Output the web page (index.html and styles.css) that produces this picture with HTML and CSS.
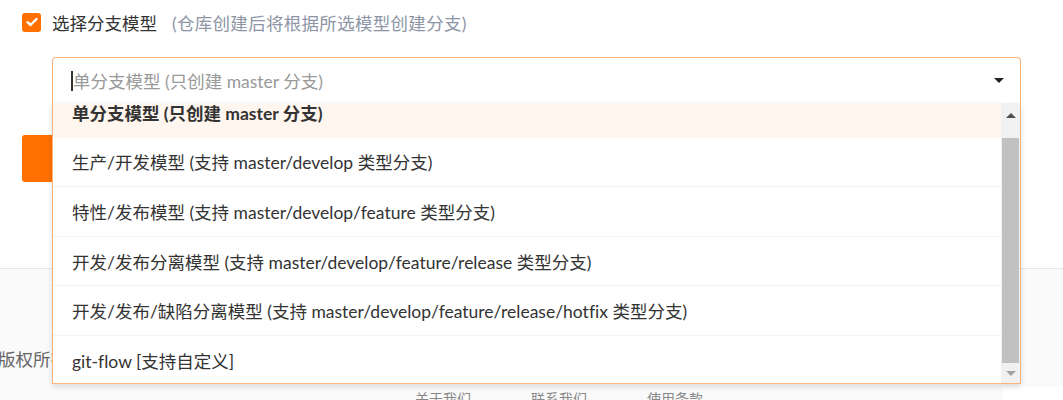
FILE: index.html
```html
<!DOCTYPE html>
<html lang="zh-CN">
<head>
<meta charset="utf-8">
<link rel="stylesheet" href="styles.css">
</head>
<body>
<div class="page">
  <section class="form">
    <div class="check-row">
      <span class="checkbox">
        <svg width="12" height="10" viewBox="0 0 12 10"><path d="M1.5 5.2 L4.6 8 L10.5 2" fill="none" stroke="#fff" stroke-width="2.4" stroke-linecap="round" stroke-linejoin="round"/></svg>
      </span>
      <span class="check-label">选择分支模型</span>
      <span class="check-hint">(仓库创建后将根据所选模型创建分支)</span>
    </div>
    <div class="select-wrap">
      <div class="select">
        <span class="caret"></span>
        <span class="placeholder">单分支模型 (只创建 master 分支)</span>
        <span class="arrow"></span>
      </div>
      <div class="dropdown">
        <div class="list">
          <div class="list-inner">
            <div class="item active">单分支模型 (只创建 master 分支)</div>
            <div class="item">生产/开发模型 (支持 master/develop 类型分支)</div>
            <div class="item">特性/发布模型 (支持 master/develop/feature 类型分支)</div>
            <div class="item">开发/发布分离模型 (支持 master/develop/feature/release 类型分支)</div>
            <div class="item">开发/发布/缺陷分离模型 (支持 master/develop/feature/release/hotfix 类型分支)</div>
            <div class="item">git-flow [支持自定义]</div>
          </div>
        </div>
        <div class="scrollbar">
          <div class="sb-btn sb-up"><span class="tri-up"></span></div>
          <div class="sb-track"><div class="sb-thumb"></div></div>
          <div class="sb-btn sb-down"><span class="tri-down"></span></div>
        </div>
      </div>
    </div>
    <button class="btn" type="button">创建</button>
  </section>
  <footer class="footer">
    <div class="copyright">版权所有 © 开源中国</div>
    <div class="footer-links">
      <span>关于我们</span><span>联系我们</span><span>使用条款</span>
    </div>
    <div class="float-box"></div>
  </footer>
</div>
</body>
</html>
```

FILE: styles.css
```css
* { box-sizing: border-box; }
html, body { margin: 0; padding: 0; }
body {
  width: 1063px;
  height: 400px;
  overflow: hidden;
  font-family: "Lato", "Noto Sans CJK SC", sans-serif;
  font-size: 17.5px;
  font-variant-ligatures: none;
  color: #333;
  background: #fafafa;
}
.page { position: relative; }
.form {
  background: #fff;
  height: 269px;
  border-bottom: 1px solid #e6e6e6;
  padding: 12px 0 0 22px;
}
.check-row {
  display: flex;
  align-items: center;
  height: 20px;
}
.checkbox {
  width: 19px;
  height: 19px;
  border-radius: 3px;
  background: #ff7000;
  display: flex;
  align-items: center;
  justify-content: center;
  margin-right: 11px;
}
.check-label { color: #333; }
.check-hint { color: #8d95a5; margin-left: 15px; letter-spacing: 0.3px; }

.select-wrap {
  position: relative;
  margin: 25px 0 0 30px;
  width: 969px;
}
.select {
  height: 46px;
  border: 1px solid #ffb27a;
  border-bottom: none;
  border-radius: 4px 4px 0 0;
  display: flex;
  align-items: center;
  padding-left: 18px;
  padding-right: 16px;
  position: relative;
}
.caret {
  width: 2px;
  height: 20px;
  background: #333;
}
.placeholder { color: #999; flex: 1; }
.arrow {
  width: 0;
  height: 0;
  border-left: 5px solid transparent;
  border-right: 5px solid transparent;
  border-top: 5px solid #222;
}
.dropdown {
  position: absolute;
  left: 0;
  top: 46px;
  width: 969px;
  height: 281px;
  background: #fff;
  border: 1px solid #ffb27a;
  border-top: none;
  box-shadow: 0 3px 6px rgba(0,0,0,0.12);
  display: flex;
  z-index: 5;
}
.list {
  flex: 1;
  overflow: hidden;
}
.list-inner { margin-top: -15px; }
.item {
  height: 49.6px;
  display: flex;
  align-items: center;
  padding-left: 19px;
  border-bottom: 1px solid #f3f3f3;
  color: #333;
  white-space: nowrap;
}
.item.active {
  background: #fff6ef;
  font-weight: 700;
  border-bottom-color: #fff6ef;
}
.item:last-child { border-bottom: none; }
.scrollbar {
  width: 19px;
  background: #f1f1f1;
  display: flex;
  flex-direction: column;
}
.sb-btn {
  display: flex;
  align-items: center;
  justify-content: center;
}
.sb-up { height: 24px; }
.sb-down { height: 20px; }
.sb-track { flex: 1; padding: 11px 1px 0 1px; }
.sb-thumb { height: 100%; background: #c1c1c1; }
.tri-up {
  border-left: 5px solid transparent;
  border-right: 5px solid transparent;
  border-bottom: 5px solid #505050;
}
.tri-down {
  border-left: 5px solid transparent;
  border-right: 5px solid transparent;
  border-top: 5px solid #a3a3a3;
}
.btn {
  display: block;
  margin-top: 32px;
  width: 120px;
  height: 47px;
  border: none;
  border-radius: 3px;
  background: #ff7000;
  color: #fff;
  font-family: inherit;
  font-size: 17.5px;
}
.footer {
  position: relative;
  height: 131px;
  padding-top: 77px;
}
.copyright {
  color: #666;
  margin-left: -2px;
}
.footer-links {
  display: flex;
  gap: 60px;
  margin: 17px 0 0 415px;
  color: #888;
  font-size: 14px;
}
.float-box {
  position: absolute;
  right: 0;
  top: 118px;
  width: 60px;
  height: 20px;
  background: #fff;
}
```
